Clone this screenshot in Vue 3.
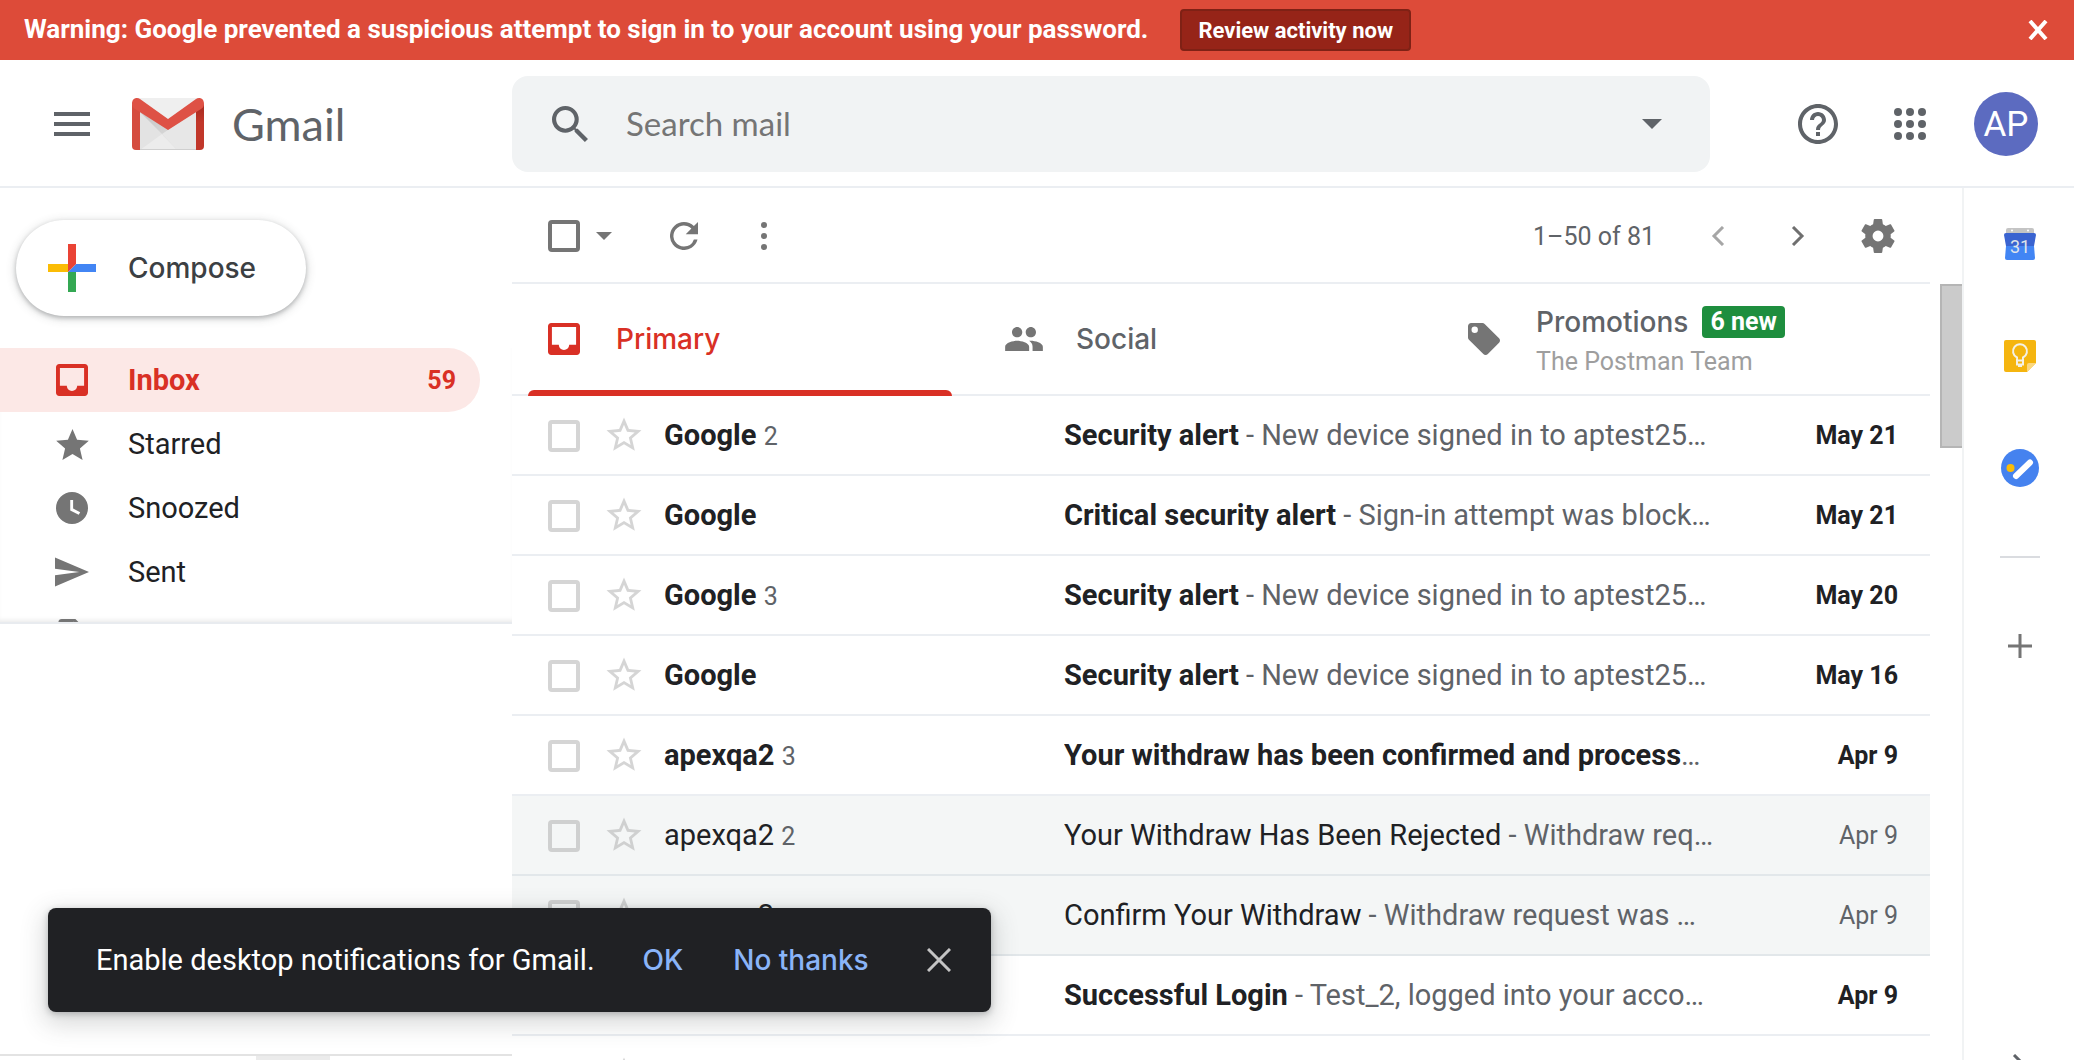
<script setup>
import { ref } from 'vue'

const query = ref('')

const folders = [
  { name: 'Inbox', icon: 'inbox', count: 59, active: true },
  { name: 'Starred', icon: 'star' },
  { name: 'Snoozed', icon: 'clock' },
  { name: 'Sent', icon: 'send' },
  { name: 'Drafts', icon: 'draft', collapsed: true },
]

const icons = {
  inbox: { box: '3 3 18 18', w: 32, h: 32, d: 'M19.2 3H4.8C3.8 3 3 3.8 3 4.8v14.4c0 1 .8 1.8 1.8 1.8h14.4c1 0 1.8-.8 1.8-1.8V4.8C21 3.8 20.200 3 19.200 3zM18.800 15.300h-3.900c0 1.600-1.300 2.900-2.900 2.900s-2.900-1.300-2.900-2.900H5.200V5.200h13.600z' },
  star: { box: '2 2 20 19', w: 33, h: 31, d: 'M12 17.270 18.180 21l-1.640-7.030L22 9.240l-7.190-.610L12 2 9.190 8.630 2 9.240l5.460 4.730L5.820 21z' },
  clock: { box: '2 2 20 20', w: 32, h: 32, d: 'M12 2a10 10 0 1 0 0 20 10 10 0 0 0 0-20zm4.200 14.200L10.900 13.500V7h1.800v5.300l4.400 2.400z' },
  send: { box: '2 3 21 18', w: 34, h: 32, d: 'M2 21 23 12 2 3v7l15 2-15 2z' },
  draft: { box: '4 2 16 20', w: 28, h: 34, d: 'M14 2H6a2 2 0 0 0-2 2v16a2 2 0 0 0 2 2h12a2 2 0 0 0 2-2V8zm-1 7V3.500L18.500 9z' },
  people: { box: '1 5 22 14', w: 38, h: 24, d: 'M16 11c1.660 0 2.990-1.340 2.990-3S17.660 5 16 5s-3 1.340-3 3 1.340 3 3 3zm-8 0c1.660 0 2.990-1.340 2.990-3S9.660 5 8 5 5 6.340 5 8s1.340 3 3 3zm0 2c-2.330 0-7 1.170-7 3.500V19h14v-2.500c0-2.330-4.670-3.500-7-3.500zm8 0c-.290 0-.620.020-.970.050 1.160.840 1.970 1.970 1.970 3.450V19h6v-2.500c0-2.330-4.670-3.500-7-3.500z' },
  tag: { box: '2 2 20 20', w: 32, h: 32, d: 'M21.410 11.580l-9-9C12.050 2.220 11.550 2 11 2H4c-1.100 0-2 .9-2 2v7c0 .550.220 1.050.590 1.420l9 9c.360.360.860.580 1.410.580s1.050-.220 1.410-.590l7-7c.370-.360.590-.860.590-1.410s-.230-1.060-.590-1.420zM6.200 8.200a2 2 0 1 1 0-4 2 2 0 0 1 0 4z' },
}

const tabs = [
  { name: 'Primary', icon: 'inbox', active: true },
  { name: 'Social', icon: 'people' },
  { name: 'Promotions', icon: 'tag', badge: '6 new', sub: 'The Postman Team' },
]

const mails = [
  { from: 'Google', n: 2, subject: 'Security alert', text: ' - New device signed in to aptest25…', date: 'May 21' },
  { from: 'Google', subject: 'Critical security alert', text: ' - Sign-in attempt was block…', date: 'May 21' },
  { from: 'Google', n: 3, subject: 'Security alert', text: ' - New device signed in to aptest25…', date: 'May 20' },
  { from: 'Google', subject: 'Security alert', text: ' - New device signed in to aptest25…', date: 'May 16' },
  { from: 'apexqa2', n: 3, subject: 'Your withdraw has been confirmed and process', text: '…', date: 'Apr 9' },
  { from: 'apexqa2', n: 2, subject: 'Your Withdraw Has Been Rejected', text: ' - Withdraw req…', date: 'Apr 9', read: true },
  { from: 'apexqa2', subject: 'Confirm Your Withdraw', text: ' - Withdraw request was …', date: 'Apr 9', read: true },
  { from: 'apexqa2', subject: 'Successful Login', text: ' - Test_2, logged into your acco…', date: 'Apr 9' },
  { from: '', subject: '', date: '' },
]
</script>

<template>
  <div class="page">
    <div class="banner" role="alert">
      <span class="warning">Warning: Google prevented a suspicious attempt to sign in to your account using your password.</span>
      <button class="review">Review activity now</button>
      <button class="banner-close" aria-label="Dismiss">
        <svg width="20" height="20" viewBox="0 0 20 20"><path d="M2 1l16 18M18 1L2 19" stroke="#fff" stroke-width="4" /></svg>
      </button>
    </div>

    <header class="header">
      <div class="brand">
        <button class="menu" aria-label="Main menu">
          <svg width="36" height="24" viewBox="0 0 36 24" fill="#5f6368"><path d="M0 0h36v4H0zM0 10h36v4H0zM0 20h36v4H0z" /></svg>
        </button>
        <svg class="logo" width="72" height="52" viewBox="0 0 72 52">
          <defs>
            <linearGradient id="edge" x1="0" y1="0" x2="0" y2="1"><stop offset="0" stop-color="#a52a20" /><stop offset=".4" stop-color="#c1372a" /></linearGradient>
            <linearGradient id="fold" x1="0" y1="0" x2="1" y2="1"><stop offset="0" stop-color="#c4c4c4" /><stop offset="1" stop-color="#e6e6e6" /></linearGradient>
          </defs>
          <path fill="#e3e3e3" d="M6 0h60v52H6z" />
          <path fill="#efefef" d="M6 0h60L36 24z" />
          <path fill="url(#fold)" d="M8 14 30 36 45 52H64V12L36 31z" />
          <path fill="#ececec" d="M8 52 30 36 45 52z" />
          <path fill="#e7e7e7" d="M30 36 64 13v39H45z" />
          <path fill="#cfcfcf" d="M6 51h60v1H6z" />
          <path fill="#d54c3f" d="M0 6v42a4 4 0 0 0 4 4h4V11z" />
          <path fill="url(#edge)" d="M72 6v42a4 4 0 0 1-4 4h-4V11z" />
          <path fill="#de5145" d="M5 0C2 0 0 2 0 6c0 2 1 4 3 5l33 21 33-21c2-1 3-3 3-5 0-4-2-6-5-6-1 0-2 .3-3 1L36 21 8 1C7 .3 6 0 5 0z" />
        </svg>
        <span class="brand-name">Gmail</span>
      </div>
      <form class="search" role="search" @submit.prevent>
        <button class="bare" aria-label="Search">
          <svg width="36" height="36" viewBox="3 3 17.500 17.500" fill="#5f6368"><path d="M15.500 14h-.790l-.280-.270A6.471 6.471 0 0 0 16 9.500 6.500 6.500 0 1 0 9.500 16c1.610 0 3.090-.590 4.230-1.570l.270.280v.790l5 4.990L20.490 19zm-6 0C7.010 14 5 11.990 5 9.500S7.010 5 9.500 5 14 7.010 14 9.500 11.990 14 9.500 14z" /></svg>
        </button>
        <input v-model="query" type="text" placeholder="Search mail" aria-label="Search mail" />
        <button class="bare" type="button" aria-label="Search options">
          <svg width="20" height="10" viewBox="0 0 20 10" fill="#5f6368"><path d="M0 0h20L10 10z" /></svg>
        </button>
      </form>
      <div class="account">
        <button class="bare" aria-label="Support">
          <svg width="40" height="40" viewBox="2 2 20 20" fill="#5f6368"><path d="M11 18h2v-2h-2zm1-16C6.480 2 2 6.480 2 12s4.480 10 10 10 10-4.480 10-10S17.520 2 12 2zm0 18c-4.410 0-8-3.590-8-8s3.590-8 8-8 8 3.590 8 8-3.590 8-8 8zm0-14c-2.210 0-4 1.790-4 4h2c0-1.100.9-2 2-2s2 .9 2 2c0 2-3 1.750-3 5h2c0-2.250 3-2.500 3-5 0-2.210-1.790-4-4-4z" /></svg>
        </button>
        <button class="bare" aria-label="Google apps">
          <svg width="32" height="32" viewBox="0 0 32 32" fill="#5f6368">
            <template v-for="r in 3" :key="r"><circle v-for="c in 3" :key="c" :cx="c * 12 - 8" :cy="r * 12 - 8" r="4" /></template>
          </svg>
        </button>
        <button class="avatar" aria-label="Account">AP</button>
      </div>
    </header>

    <div class="body">
      <aside class="side">
        <button class="compose">
          <svg width="48" height="48" viewBox="0 0 48 48">
            <path fill="#fbbc05" d="M0 20h20v8H0z" /><path fill="#34a853" d="M20 28h8v20h-8z" />
            <path fill="#4285f4" d="M28 20h20v8H20z" /><path fill="#ea4335" d="M20 0h8v20l-8 8z" />
          </svg>
          Compose
        </button>
        <nav class="folders">
          <a v-for="f in folders" :key="f.name" href="#" class="folder" :class="{ active: f.active }" :aria-label="f.name">
            <span class="slot"><svg :width="icons[f.icon].w" :height="icons[f.icon].h" :viewBox="icons[f.icon].box"><path fill="currentColor" :d="icons[f.icon].d" /></svg></span>
            <span v-if="!f.collapsed" class="label">{{ f.name }}</span>
            <span v-if="f.count" class="count">{{ f.count }}</span>
          </a>
        </nav>
        <div class="chat"></div>
        <div class="chat-tabs"><span class="chat-tab"></span></div>
      </aside>

      <main class="main">
        <div class="toolbar">
          <input class="check dark" type="checkbox" aria-label="Select all" />
          <button class="bare pick" aria-label="Select options">
            <svg width="16" height="8" viewBox="0 0 16 8" fill="#757575"><path d="M0 0h16L8 8z" /></svg>
          </button>
          <button class="bare refresh" aria-label="Refresh">
            <svg width="28" height="28" viewBox="4 4 16 16" fill="#757575"><path d="M17.650 6.350A7.958 7.958 0 0 0 12 4a8 8 0 1 0 7.730 10h-2.080A5.990 5.990 0 0 1 12 18a6 6 0 1 1 4.220-10.220L13 11h7V4z" /></svg>
          </button>
          <button class="bare" aria-label="More">
            <svg width="8" height="28" viewBox="0 0 8 28" fill="#757575"><circle cx="4" cy="3" r="3" /><circle cx="4" cy="14" r="3" /><circle cx="4" cy="25" r="3" /></svg>
          </button>
          <div class="pager">
            <span class="range">1–50 of 81</span>
            <button class="bare" aria-label="Newer"><svg width="14" height="20" viewBox="0 0 14 20" fill="none" stroke="#a6a6a6" stroke-width="3"><path d="M12 1 3 10l9 9" /></svg></button>
            <button class="bare" aria-label="Older"><svg width="14" height="20" viewBox="0 0 14 20" fill="none" stroke="#6f6f6f" stroke-width="3"><path d="M2 1l9 9-9 9" /></svg></button>
            <button class="bare gear" aria-label="Settings">
              <svg width="34" height="34" viewBox="2 2 20 20" fill="#757575"><path d="M19.430 12.980c.040-.320.070-.640.070-.980s-.030-.660-.070-.980l2.110-1.650c.190-.150.240-.420.120-.640l-2-3.460c-.120-.220-.390-.300-.610-.220l-2.490 1c-.520-.400-1.080-.730-1.690-.980l-.380-2.650A.488.488 0 0 0 14 2h-4c-.250 0-.460.180-.490.420l-.380 2.650c-.610.250-1.170.590-1.690.980l-2.490-1c-.230-.090-.490 0-.610.220l-2 3.460c-.130.220-.070.490.120.640l2.110 1.650c-.040.320-.070.650-.070.980s.030.660.070.980l-2.110 1.650c-.190.150-.240.420-.120.640l2 3.460c.120.220.390.300.610.220l2.490-1c.520.400 1.080.730 1.690.980l.380 2.650c.030.240.240.420.490.420h4c.250 0 .460-.180.490-.420l.380-2.650c.610-.250 1.170-.590 1.690-.980l2.490 1c.230.090.490 0 .610-.220l2-3.460c.120-.220.070-.490-.120-.640zM12 15.200a3.200 3.200 0 1 1 0-6.400 3.200 3.200 0 0 1 0 6.400z" /></svg>
            </button>
          </div>
        </div>

        <div class="scroll">
          <div class="list">
            <div class="tabs" role="tablist">
              <button v-for="t in tabs" :key="t.name" role="tab" class="tab" :class="{ active: t.active, detailed: t.sub }">
                <span class="tab-icon"><svg :width="icons[t.icon].w" :height="icons[t.icon].h" :viewBox="icons[t.icon].box"><path fill="currentColor" :d="icons[t.icon].d" /></svg></span>
                <span class="tab-text">
                  <span class="tab-title">{{ t.name }}<span v-if="t.badge" class="badge">{{ t.badge }}</span></span>
                  <span v-if="t.sub" class="tab-sub">{{ t.sub }}</span>
                </span>
              </button>
            </div>
            <table class="mails">
              <colgroup><col class="c-check" /><col class="c-star" /><col class="c-from" /><col /><col class="c-date" /></colgroup>
              <tbody>
                <tr v-for="(m, i) in mails" :key="i" :class="{ read: m.read }">
                  <td class="cell-check"><input class="check" type="checkbox" aria-label="Select conversation" /></td>
                  <td>
                    <button class="bare" aria-label="Star">
                      <svg width="42" height="42" viewBox="0 0 24 24" fill="currentColor"><path d="M22 9.240l-7.190-.620L12 2 9.190 8.630 2 9.240l5.460 4.730L5.820 21 12 17.270 18.180 21l-1.630-7.030zM12 15.400l-3.760 2.270 1-4.280-3.320-2.880 4.380-.380L12 6.100l1.710 4.040 4.380.380-3.320 2.880 1 4.280z" /></svg>
                    </button>
                  </td>
                  <td class="from">{{ m.from }} <span v-if="m.n" class="n">{{ m.n }}</span></td>
                  <td class="subject"><span class="title">{{ m.subject }}</span><span v-if="m.text">{{ m.text }}</span></td>
                  <td class="date">{{ m.date }}</td>
                </tr>
              </tbody>
            </table>
          </div>
          <div class="track"><div class="thumb"></div></div>
        </div>
      </main>

      <aside class="addons">
        <button class="bare addon" aria-label="Calendar">
          <svg width="32" height="32" viewBox="0 0 32 32">
            <path fill="#c4c4c4" d="M2 6V2a2 2 0 0 1 2-2h24a2 2 0 0 1 2 2v4z" /><circle cx="8" cy="2.500" r="1" fill="#fff" /><circle cx="24" cy="2.500" r="1" fill="#fff" />
            <path fill="#4285f4" d="M2 18h28l1 12a2 2 0 0 1-2 2H3a2 2 0 0 1-2-2z" /><path fill="#3a63d0" d="M0 7a2 2 0 0 1 2-2h28a2 2 0 0 1 2 2l-2 11H2z" />
            <text x="16" y="25" text-anchor="middle" font-size="18" fill="#dfe3ea" font-family="Roboto, sans-serif">31</text>
          </svg>
        </button>
        <button class="bare addon" aria-label="Keep">
          <svg width="32" height="32" viewBox="0 0 32 32">
            <path fill="#f5b50f" d="M2 0h28a2 2 0 0 1 2 2v21l-9 9H2a2 2 0 0 1-2-2V2a2 2 0 0 1 2-2z" /><path fill="#fbd87f" d="M32 23h-7a2 2 0 0 0-2 2v7z" />
            <g fill="none" stroke="#f4f1e6" stroke-width="2"><path d="M13 20v-2.500a7 7 0 1 1 6 0V20" /><path d="M13 20.500h6v4h-6z" /></g><path fill="#f4f1e6" d="M14 24h4v3h-4z" />
          </svg>
        </button>
        <button class="bare addon" aria-label="Tasks">
          <svg width="38" height="38" viewBox="0 0 38 38">
            <circle cx="19" cy="19" r="19" fill="#4582ef" /><circle cx="9.500" cy="19" r="4" fill="#fbbc05" />
            <path d="M15 27 29 13.500" stroke="#fff" stroke-width="6" stroke-linecap="round" />
          </svg>
        </button>
        <span class="rule"></span>
        <button class="bare addon" aria-label="Get add-ons">
          <svg width="24" height="24" viewBox="0 0 24 24" stroke="#757575" stroke-width="3"><path d="M12 0v24M0 12h24" /></svg>
        </button>
        <button class="bare collapse" aria-label="Hide side panel">
          <svg width="14" height="24" viewBox="0 0 14 24" fill="none" stroke="#5f6368" stroke-width="3"><path d="M2 1l11 11L2 23" /></svg>
        </button>
      </aside>
    </div>

    <div class="toast" role="status">
      <span class="toast-text">Enable desktop notifications for Gmail.</span>
      <button class="action">OK</button>
      <button class="action">No thanks</button>
      <button class="bare toast-close" aria-label="Close">
        <svg width="24" height="24" viewBox="0 0 24 24" stroke="#c4c4c4" stroke-width="3"><path d="M1 1l22 22M23 1L1 23" /></svg>
      </button>
    </div>
  </div>
</template>

<style>
body {
  margin: 0;
  overflow: hidden;
}
</style>

<style scoped>
* {
  box-sizing: border-box;
}
.page {
  position: relative;
  display: flex;
  flex-direction: column;
  height: 100vh;
  overflow: hidden;
  background: #fff;
  color: #202124;
  font-family: Roboto, Arial, sans-serif;
  font-size: 29px;
}
button,
input {
  font: inherit;
  margin: 0;
  padding: 0;
}
button {
  border: 0;
  background: none;
  color: inherit;
  cursor: pointer;
}
.bare {
  display: flex;
  align-items: center;
  justify-content: center;
}
svg {
  display: block;
  flex: none;
}
.banner {
  flex: none;
  display: flex;
  align-items: center;
  height: 60px;
  padding: 0 26px 0 24px;
  background: #dd4b39;
  color: #fff;
  font-size: 26px;
  font-weight: 700;
  white-space: nowrap;
}
.warning {
  padding-bottom: 2px;
}
.review {
  height: 42px;
  margin-left: 32px;
  padding: 0 16px;
  border: 2px solid #7f2115;
  border-radius: 4px;
  background: #962418;
  font-size: 22px;
  font-weight: 700;
}
.banner-close {
  margin-left: auto;
}
.header {
  flex: none;
  display: flex;
  align-items: center;
  height: 128px;
  padding: 2px 36px 0 0;
  border-bottom: 2px solid #ebeef2;
}
.brand {
  flex: none;
  display: flex;
  align-items: center;
  width: 512px;
  padding-left: 54px;
}
.logo {
  margin: 0 28px 0 42px;
}
.brand-name {
  color: #5f6368;
  font-family: Lato, sans-serif;
  font-size: 45px;
}
.search {
  flex: 1;
  display: flex;
  align-items: center;
  height: 96px;
  padding: 0 48px 0 40px;
  border-radius: 16px;
  background: #f1f3f4;
}
.search input {
  flex: 1;
  min-width: 0;
  margin-left: 38px;
  padding-bottom: 2px;
  border: 0;
  outline: 0;
  background: none;
  font-family: Lato, sans-serif;
  font-size: 33px;
}
.search input::placeholder {
  color: #757575;
  opacity: 1;
}
.account {
  flex: none;
  display: flex;
  align-items: center;
  justify-content: flex-end;
  width: 328px;
}
.account .bare {
  margin-right: 56px;
}
.account .bare + .avatar {
  margin-left: -8px;
}
.avatar {
  width: 64px;
  height: 64px;
  border-radius: 50%;
  background: #5c6bc0;
  color: #fff;
  font-size: 35px;
}
.body {
  flex: 1;
  display: flex;
  min-height: 0;
}
.side {
  flex: none;
  display: flex;
  flex-direction: column;
  width: 512px;
}
.compose,
.tab,
.action {
  font-family: Inter, sans-serif;
  font-size: 28px;
  font-weight: 500;
}
.compose {
  flex: none;
  display: flex;
  align-items: center;
  gap: 32px;
  align-self: flex-start;
  height: 96px;
  margin: 32px 0 32px 16px;
  padding: 0 50px 0 32px;
  border-radius: 48px;
  box-shadow: 0 2px 4px rgba(60, 64, 67, 0.3), 0 2px 8px 2px rgba(60, 64, 67, 0.15);
  color: #3c4043;
}
.folders {
  flex: none;
  height: 276px;
  overflow: hidden;
  border-bottom: 2px solid #e8ebef;
  box-shadow: inset 0 -4px 4px -2px rgba(0, 0, 0, 0.08);
}
.folder {
  display: flex;
  align-items: center;
  height: 64px;
  margin-right: 32px;
  padding: 0 24px 0 52px;
  border-radius: 0 32px 32px 0;
  color: #202124;
  text-decoration: none;
}
.slot {
  display: flex;
  justify-content: center;
  width: 40px;
  margin-right: 36px;
  color: #757575;
}
.label {
  flex: 1;
}
.count {
  font-size: 25px;
}
.folder.active {
  background: #fce8e6;
  color: #d93025;
  font-weight: 700;
}
.folder.active .slot {
  color: inherit;
}
.chat {
  flex: 1;
}
.chat-tabs {
  display: flex;
  justify-content: center;
  height: 6px;
  padding-left: 74px;
  border-top: 2px solid #e3e3e3;
}
.chat-tab {
  width: 74px;
  background: #ebebeb;
}
.main {
  flex: 1;
  display: flex;
  flex-direction: column;
  min-width: 0;
}
.toolbar {
  flex: none;
  display: flex;
  align-items: center;
  height: 96px;
  margin-right: 32px;
  padding: 2px 35px 0 36px;
  border-bottom: 2px solid #ebeef2;
}
.check {
  appearance: none;
  display: block;
  width: 32px;
  height: 32px;
  border: 4px solid #d5d5d5;
  border-radius: 4px;
}
.check.dark {
  border-color: #757575;
}
.pick {
  margin: 0 58px 0 16px;
}
.refresh {
  margin-right: 62px;
}
.pager {
  display: flex;
  align-items: center;
  gap: 66px;
  margin-left: auto;
  color: #5f6368;
  font-size: 25px;
}
.range {
  margin-right: -10px;
}
.gear {
  margin-left: -10px;
}
.scroll {
  flex: 1;
  display: flex;
  gap: 10px;
  min-height: 0;
}
.list {
  flex: 1;
  min-width: 0;
  overflow: hidden;
}
.track {
  width: 22px;
}
.thumb {
  height: 164px;
  border: 2px solid #b5b5b5;
  border-right: 0;
  background: #cbcbcb;
}
.tabs {
  display: flex;
  height: 112px;
  padding: 0 22px 0 16px;
  border-bottom: 2px solid #ebeef2;
}
.tab {
  position: relative;
  flex: 1;
  display: flex;
  align-items: center;
  padding-left: 16px;
  color: #5f6368;
  text-align: left;
}
.tab-icon {
  display: flex;
  justify-content: center;
  width: 40px;
  margin-right: 32px;
  color: #757575;
}
.tab.active,
.tab.active .tab-icon {
  color: #d93025;
}
.tab.active::after {
  content: '';
  position: absolute;
  left: 0;
  right: 36px;
  bottom: -2px;
  height: 6px;
  border-radius: 6px 6px 0 0;
  background: #d93025;
}
.tab-text {
  display: flex;
  flex-direction: column;
  gap: 8px;
}
.detailed .tab-text {
  padding-top: 6px;
}
.tab-title {
  display: flex;
  align-items: center;
  line-height: 32px;
}
.badge {
  margin-left: 14px;
  padding: 0 8px;
  border-radius: 4px;
  background: #1e8e3e;
  color: #fff;
  font-family: Roboto, sans-serif;
  font-size: 25px;
  font-weight: 700;
}
.tab-sub {
  color: #9e9e9e;
  font-family: Roboto, sans-serif;
  font-size: 25px;
  font-weight: 400;
  line-height: 32px;
}
.mails {
  width: 100%;
  table-layout: fixed;
  border-spacing: 0;
}
.c-check {
  width: 91px;
}
.c-star {
  width: 61px;
}
.c-from {
  width: 400px;
}
.c-date {
  width: 160px;
}
.mails td {
  height: 80px;
  padding: 0;
  border-bottom: 2px solid #ebeef2;
  font-weight: 700;
  white-space: nowrap;
}
.mails td .bare {
  color: #d5d5d5;
}
.mails .cell-check {
  padding: 2px 0 0 36px;
}
.mails .n {
  color: #5f6368;
  font-size: 25px;
  font-weight: 400;
}
.mails .subject {
  overflow: hidden;
  color: #5f6368;
  font-weight: 400;
  white-space: pre;
}
.title {
  color: #202124;
  font-weight: 700;
}
.mails .date {
  padding-right: 32px;
  font-size: 25px;
  text-align: right;
}
.mails .read td {
  border-color: #e2e7ea;
  background: #f4f6f6;
  font-weight: 400;
}
.read .title {
  font-weight: 400;
}
.mails .read .date {
  color: #5f6368;
}
.mails .read .bare {
  color: #cfd0d0;
}
.read .check {
  border-color: #cfd0d0;
}
.addons {
  position: relative;
  flex: none;
  display: flex;
  flex-direction: column;
  align-items: center;
  width: 112px;
  padding: 40px 0 0 2px;
  border-left: 2px solid #f1f3f4;
}
.addon {
  height: 32px;
  margin-bottom: 80px;
}
.rule {
  width: 40px;
  height: 2px;
  margin: -8px 0 72px;
  background: #dadce0;
}
.collapse {
  position: absolute;
  left: 48px;
  bottom: -18px;
}
.toast {
  position: absolute;
  left: 48px;
  bottom: 48px;
  display: flex;
  align-items: center;
  height: 104px;
  padding: 0 40px 0 48px;
  border-radius: 8px;
  background: #202124;
  box-shadow: 0 2px 6px rgba(60, 64, 67, 0.3), 0 8px 24px 4px rgba(60, 64, 67, 0.2);
  color: #fff;
}
.toast-text {
  margin-right: 48px;
}
.action {
  margin-right: 50px;
  color: #8ab4f8;
}
.toast-close {
  margin-left: 8px;
}
</style>
